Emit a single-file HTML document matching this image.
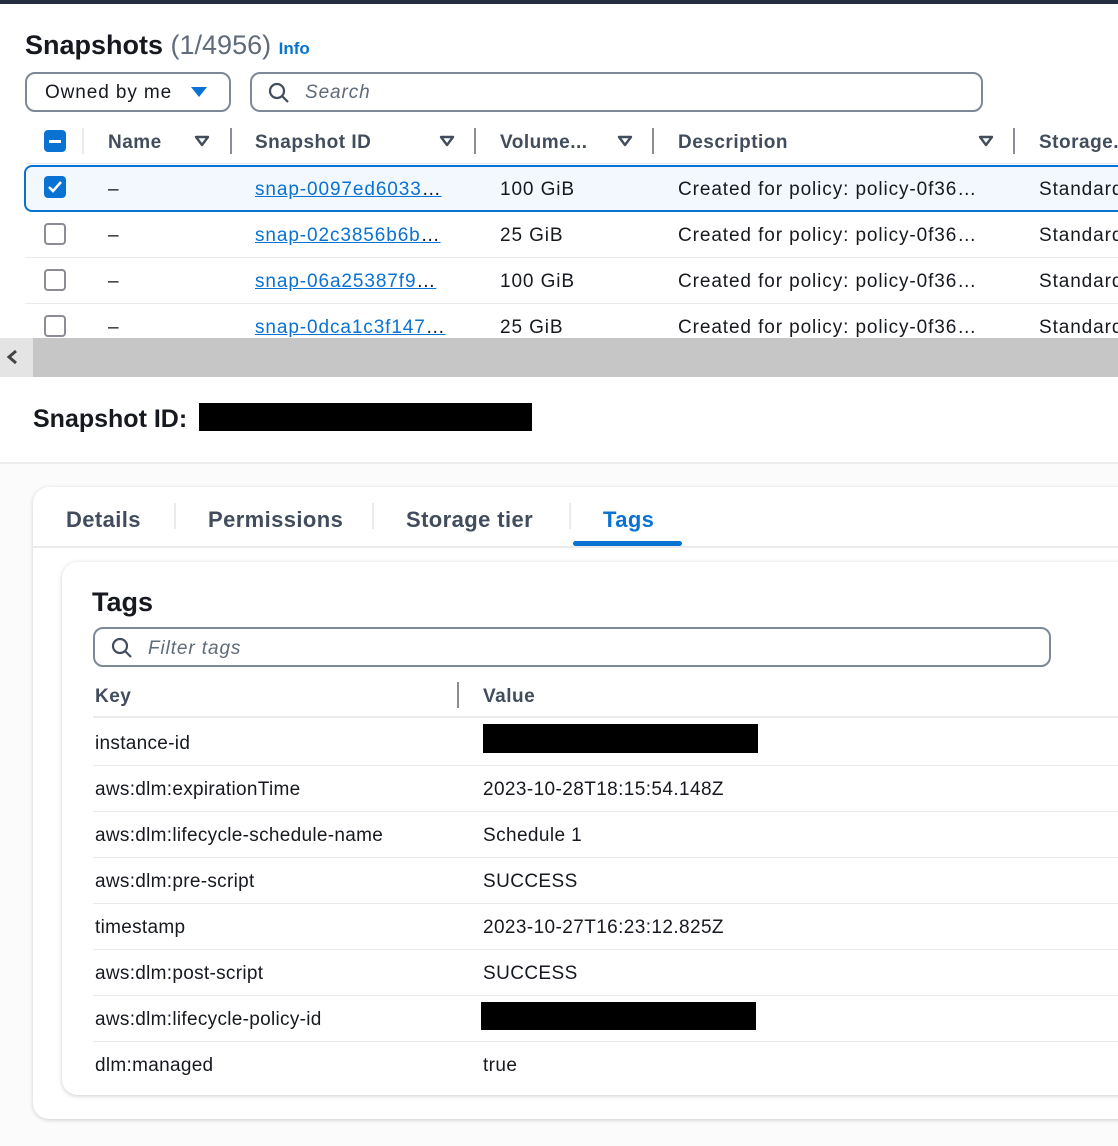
<!DOCTYPE html>
<html><head><meta charset="utf-8"><style>
*{box-sizing:border-box;margin:0;padding:0}
body{width:1118px;height:1146px;overflow:hidden;background:#fbfbfb;font-family:"Liberation Sans",sans-serif;color:#16191f;position:relative}
.a{position:absolute;white-space:nowrap}
.t{font-size:19px;line-height:22px;letter-spacing:0.9px}
.h{font-weight:bold;color:#414d5c;font-size:19px;letter-spacing:0.5px}
.lnk{color:#0972d3;text-decoration:underline}
.cb{position:absolute;width:22px;height:22px;border:2px solid #8c8c94;border-radius:4px;background:#fff}
.cb.on{background:#0972d3;border-color:#0972d3}
.sep{position:absolute;width:2px;height:26px;background:#8c8c94}
.car{position:absolute}
.rl{position:absolute;height:1px;background:#e9ebed}
.tab{position:absolute;font-size:22px;font-weight:bold;color:#414d5c;letter-spacing:0.4px;white-space:nowrap}
</style></head><body>
<div class="a" style="left:0;top:0;width:1118px;height:4px;background:#232f3e"></div>
<div class="a" style="left:0;top:4px;width:1118px;height:334px;background:#fff"></div>
<div class="a" style="left:25px;top:30px;font-size:27px;font-weight:bold">Snapshots <span style="font-weight:normal;color:#5f6b7a">(1/4956)</span> <span style="font-size:17px;color:#0972d3">Info</span></div>
<div class="a" style="left:25px;top:72px;width:206px;height:40px;border:2px solid #7d8998;border-radius:10px"></div>
<div class="a t" style="left:45px;top:82px">Owned by me</div>
<svg class="a" style="left:190px;top:86px" width="18" height="12"><path d="M1 1h16L9 11z" fill="#0972d3"/></svg>
<div class="a" style="left:250px;top:72px;width:733px;height:40px;border:2px solid #7d8998;border-radius:10px"></div>
<svg class="a" style="left:267px;top:81px" width="24" height="24"><circle cx="10" cy="10" r="7" fill="none" stroke="#414d5c" stroke-width="2.2"/><path d="M15 15l6 6" stroke="#414d5c" stroke-width="2.2"/></svg>
<div class="a t" style="left:305px;top:82px;font-style:italic;color:#5f6b7a">Search</div>
<!-- header -->
<div class="cb on" style="left:44px;top:130px"></div><div class="a" style="left:49px;top:140px;width:12px;height:3px;background:#fff"></div>
<div class="sep" style="left:82px;top:128px;background:#e9ebed"></div>
<div class="a h" style="left:108px;top:132px">Name</div><svg class="car" style="left:194px;top:135px" width="16" height="12"><path d="M2 2h12L8 10z" fill="none" stroke="#414d5c" stroke-width="2.4" stroke-linejoin="round"/></svg><div class="sep" style="left:230px;top:128px"></div>
<div class="a h" style="left:255px;top:132px">Snapshot ID</div><svg class="car" style="left:439px;top:135px" width="16" height="12"><path d="M2 2h12L8 10z" fill="none" stroke="#414d5c" stroke-width="2.4" stroke-linejoin="round"/></svg><div class="sep" style="left:474px;top:128px"></div>
<div class="a h" style="left:500px;top:132px">Volume...</div><svg class="car" style="left:617px;top:135px" width="16" height="12"><path d="M2 2h12L8 10z" fill="none" stroke="#414d5c" stroke-width="2.4" stroke-linejoin="round"/></svg><div class="sep" style="left:652px;top:128px"></div>
<div class="a h" style="left:678px;top:132px">Description</div><svg class="car" style="left:978px;top:135px" width="16" height="12"><path d="M2 2h12L8 10z" fill="none" stroke="#414d5c" stroke-width="2.4" stroke-linejoin="round"/></svg><div class="sep" style="left:1013px;top:128px"></div>
<div class="a h" style="left:1039px;top:132px">Storage...</div>
<div class="rl" style="left:25px;top:163px;width:1093px"></div>
<div class="a" style="left:24px;top:165px;width:1110px;height:47px;border:2px solid #0972d3;border-radius:8px;background:#f2f8fd"></div>
<div class="cb on" style="left:44px;top:176px"></div>
<svg class="a" style="left:47px;top:180px" width="16" height="14"><path d="M2 7l4 4 8-9" fill="none" stroke="#fff" stroke-width="2.5"/></svg>
<div class="rl" style="left:25px;top:257px;width:1093px"></div>
<div class="rl" style="left:25px;top:303px;width:1093px"></div>
<div class="cb" style="left:44px;top:223px"></div>
<div class="cb" style="left:44px;top:269px"></div>
<div class="cb" style="left:44px;top:315px"></div>
<div class="a t" style="left:108px;top:179px">–</div><div class="a t lnk" style="left:255px;top:179px">snap-0097ed6033<span style="text-decoration:none;color:#16191f">…</span></div><div class="a t" style="left:500px;top:179px">100 GiB</div><div class="a t" style="left:678px;top:179px">Created for policy: policy-0f36…</div><div class="a t" style="left:1039px;top:179px">Standard</div>
<div class="a t" style="left:108px;top:225px">–</div><div class="a t lnk" style="left:255px;top:225px">snap-02c3856b6b<span style="text-decoration:none;color:#16191f">…</span></div><div class="a t" style="left:500px;top:225px">25 GiB</div><div class="a t" style="left:678px;top:225px">Created for policy: policy-0f36…</div><div class="a t" style="left:1039px;top:225px">Standard</div>
<div class="a t" style="left:108px;top:271px">–</div><div class="a t lnk" style="left:255px;top:271px">snap-06a25387f9<span style="text-decoration:none;color:#16191f">…</span></div><div class="a t" style="left:500px;top:271px">100 GiB</div><div class="a t" style="left:678px;top:271px">Created for policy: policy-0f36…</div><div class="a t" style="left:1039px;top:271px">Standard</div>
<div class="a t" style="left:108px;top:317px">–</div><div class="a t lnk" style="left:255px;top:317px">snap-0dca1c3f147<span style="text-decoration:none;color:#16191f">…</span></div><div class="a t" style="left:500px;top:317px">25 GiB</div><div class="a t" style="left:678px;top:317px">Created for policy: policy-0f36…</div><div class="a t" style="left:1039px;top:317px">Standard</div>
<!-- scrollbar -->
<div class="a" style="left:0;top:338px;width:1118px;height:39px;background:#c6c6c6"></div>
<div class="a" style="left:0;top:338px;width:33px;height:39px;background:#e4e4e4"></div>
<svg class="a" style="left:5px;top:349px" width="14" height="16"><path d="M11 2L4 8l7 6" fill="none" stroke="#444" stroke-width="3"/></svg>
<div class="a" style="left:0;top:377px;width:1118px;height:86px;background:#fff"></div>
<div class="a" style="left:33px;top:405px;font-size:25px;font-weight:bold">Snapshot ID:</div>
<div class="a" style="left:199px;top:403px;width:333px;height:28px;background:#000"></div>
<div class="a" style="left:0;top:462px;width:1118px;height:2px;background:#eceef0"></div>
<!-- outer card -->
<div class="a" style="left:33px;top:487px;width:1110px;height:632px;background:#fff;border-radius:16px;box-shadow:0 1px 4px rgba(0,7,22,.18)"></div>
<div class="tab" style="left:66px;top:507px">Details</div>
<div class="sep" style="left:174px;top:503px;background:#e9ebed"></div>
<div class="tab" style="left:208px;top:507px">Permissions</div>
<div class="sep" style="left:372px;top:503px;background:#e9ebed"></div>
<div class="tab" style="left:406px;top:507px">Storage tier</div>
<div class="sep" style="left:569px;top:503px;background:#e9ebed"></div>
<div class="tab" style="left:603px;top:507px;color:#0972d3">Tags</div>
<div class="a" style="left:573px;top:541px;width:109px;height:5px;border-radius:3px;background:#0972d3"></div>
<div class="a" style="left:33px;top:546px;width:1085px;height:2px;background:#e9ebed"></div>
<!-- inner card -->
<div class="a" style="left:62px;top:562px;width:1080px;height:533px;background:#fff;border-radius:16px;box-shadow:0 1px 5px rgba(0,7,22,.2)"></div>
<div class="a" style="left:92px;top:587px;font-size:27px;font-weight:bold">Tags</div>
<div class="a" style="left:93px;top:627px;width:958px;height:40px;border:2px solid #7d8998;border-radius:10px"></div>
<svg class="a" style="left:110px;top:636px" width="24" height="24"><circle cx="10" cy="10" r="7" fill="none" stroke="#414d5c" stroke-width="2.2"/><path d="M15 15l6 6" stroke="#414d5c" stroke-width="2.2"/></svg>
<div class="a t" style="left:148px;top:638px;font-style:italic;color:#5f6b7a">Filter tags</div>
<div class="a h" style="left:95px;top:686px">Key</div>
<div class="sep" style="left:457px;top:682px"></div>
<div class="a h" style="left:483px;top:686px">Value</div>
<div class="a" style="left:93px;top:716px;width:1025px;height:2px;background:#e9ebed"></div>
<div class="rl" style="left:93px;top:765px;width:1025px"></div>
<div class="rl" style="left:93px;top:811px;width:1025px"></div>
<div class="rl" style="left:93px;top:857px;width:1025px"></div>
<div class="rl" style="left:93px;top:903px;width:1025px"></div>
<div class="rl" style="left:93px;top:949px;width:1025px"></div>
<div class="rl" style="left:93px;top:995px;width:1025px"></div>
<div class="rl" style="left:93px;top:1041px;width:1025px"></div>
<div class="a t" style="left:95px;top:733px;letter-spacing:0.3px">instance-id</div><div class="a" style="left:483px;top:724px;width:275px;height:29px;background:#000"></div>
<div class="a t" style="left:95px;top:779px;letter-spacing:0.3px">aws:dlm:expirationTime</div><div class="a t" style="left:483px;top:779px;letter-spacing:0.4px">2023-10-28T18:15:54.148Z</div>
<div class="a t" style="left:95px;top:825px;letter-spacing:0.3px">aws:dlm:lifecycle-schedule-name</div><div class="a t" style="left:483px;top:825px;letter-spacing:0.4px">Schedule 1</div>
<div class="a t" style="left:95px;top:871px;letter-spacing:0.3px">aws:dlm:pre-script</div><div class="a t" style="left:483px;top:871px;letter-spacing:0.4px">SUCCESS</div>
<div class="a t" style="left:95px;top:917px;letter-spacing:0.3px">timestamp</div><div class="a t" style="left:483px;top:917px;letter-spacing:0.4px">2023-10-27T16:23:12.825Z</div>
<div class="a t" style="left:95px;top:963px;letter-spacing:0.3px">aws:dlm:post-script</div><div class="a t" style="left:483px;top:963px;letter-spacing:0.4px">SUCCESS</div>
<div class="a t" style="left:95px;top:1009px;letter-spacing:0.3px">aws:dlm:lifecycle-policy-id</div><div class="a" style="left:481px;top:1002px;width:275px;height:28px;background:#000"></div>
<div class="a t" style="left:95px;top:1055px;letter-spacing:0.3px">dlm:managed</div><div class="a t" style="left:483px;top:1055px;letter-spacing:0.4px">true</div>
</body></html>
